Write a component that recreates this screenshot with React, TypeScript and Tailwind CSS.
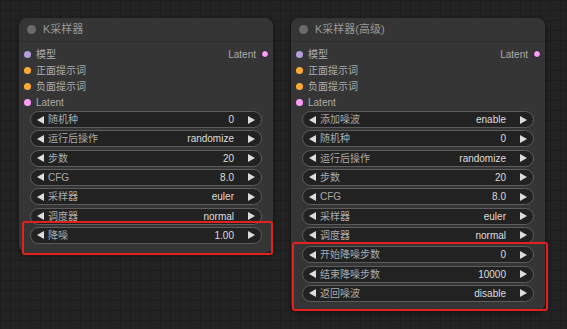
import React from 'react';

type Slot = { name: string; color: string };
type Widget = { label: string; value: string };

const font = { fontFamily: '"Liberation Sans", "Noto Sans CJK SC", sans-serif' };

const inputs: Slot[] = [
  { name: '模型', color: 'bg-[#b39ddb]' },
  { name: '正面提示词', color: 'bg-[#ffa931]' },
  { name: '负面提示词', color: 'bg-[#ffa931]' },
  { name: 'Latent', color: 'bg-[#ff9cf9]' },
];

const basicWidgets: Widget[] = [
  { label: '随机种', value: '0' },
  { label: '运行后操作', value: 'randomize' },
  { label: '步数', value: '20' },
  { label: 'CFG', value: '8.0' },
  { label: '采样器', value: 'euler' },
  { label: '调度器', value: 'normal' },
  { label: '降噪', value: '1.00' },
];

const advancedWidgets: Widget[] = [
  { label: '添加噪波', value: 'enable' },
  { label: '随机种', value: '0' },
  { label: '运行后操作', value: 'randomize' },
  { label: '步数', value: '20' },
  { label: 'CFG', value: '8.0' },
  { label: '采样器', value: 'euler' },
  { label: '调度器', value: 'normal' },
  { label: '开始降噪步数', value: '0' },
  { label: '结束降噪步数', value: '10000' },
  { label: '返回噪波', value: 'disable' },
];

function Arrow({ dir }: { dir: 'left' | 'right' }) {
  return (
    <svg width="7" height="8" viewBox="0 0 7 8" className="shrink-0">
      <path d={dir === 'left' ? 'M7 0 L0 4 L7 8 Z' : 'M0 0 L7 4 L0 8 Z'} fill="#dddddd" />
    </svg>
  );
}

function WidgetRow({ w }: { w: Widget }) {
  return (
    <div className="mx-[11px] flex h-[17px] items-center rounded-full border border-[#5c5c5c] bg-[#222222] pl-[6px] pr-[6px] text-[10px]">
      <Arrow dir="left" />
      <span className="ml-[4px] text-[#ababab]">{w.label}</span>
      <span className="ml-auto mr-[14px] text-[#dddddd]">{w.value}</span>
      <Arrow dir="right" />
    </div>
  );
}

function Node({
  title,
  widgets,
  highlight,
}: {
  title: string;
  widgets: Widget[];
  highlight: number;
}) {
  const plain = widgets.slice(0, widgets.length - highlight);
  const marked = widgets.slice(widgets.length - highlight);
  return (
    <div className="w-[254px] rounded-[8px] bg-[#353535] pb-[9px] shadow-[0_2px_6px_rgba(0,0,0,0.45)]">
      {/* title bar */}
      <div className="flex h-[24px] items-center border-b border-[#2c2c2c] pl-[8px]">
        <span className="h-[9px] w-[9px] rounded-full bg-[#6a6a6a]" />
        <span className="ml-[7px] text-[11px] text-[#999999]">{title}</span>
      </div>

      {/* slots */}
      <div className="pt-[4px] text-[10px] text-[#ababab]">
        {inputs.map((s, i) => (
          <div key={s.name} className="flex h-[16px] items-center pl-[5px] pr-[4px]">
            <span className={`h-[7px] w-[7px] rounded-full ${s.color}`} />
            <span className="ml-[5px]">{s.name}</span>
            {i === 0 && (
              <>
                <span className="ml-auto">Latent</span>
                <span className="ml-[5px] h-[8px] w-[8px] rounded-full border border-[#1a1a1a] bg-[#ff9cf9]" />
              </>
            )}
          </div>
        ))}
      </div>

      {/* widgets */}
      <div className="mt-[1px] flex flex-col gap-y-[2.33px]">
        {plain.map((w) => (
          <WidgetRow key={w.label} w={w} />
        ))}
        <div className="relative flex flex-col gap-y-[2.33px]">
          {marked.map((w) => (
            <WidgetRow key={w.label} w={w} />
          ))}
          <div
            className={
              highlight === 1
                ? 'pointer-events-none absolute -top-[6px] -bottom-[11px] left-[3px] -right-[0px] rounded-[3px] border-2 border-[#e3201b]'
                : 'pointer-events-none absolute -top-[4px] -bottom-[9px] left-[1px] -right-[3px] rounded-[3px] border-2 border-[#e3201b]'
            }
          />
        </div>
      </div>
    </div>
  );
}

export default function App() {
  return (
    <div
      style={font}
      className="flex h-[329px] w-[567px] items-start gap-[18px] overflow-hidden bg-[#232323] bg-[linear-gradient(to_right,#1d1d1d_1px,transparent_1px),linear-gradient(to_bottom,#1d1d1d_1px,transparent_1px)] bg-[size:10px_10px] pl-[19px] pt-[18px]"
    >
      <Node title="K采样器" widgets={basicWidgets} highlight={1} />
      <Node title="K采样器(高级)" widgets={advancedWidgets} highlight={3} />
    </div>
  );
}
